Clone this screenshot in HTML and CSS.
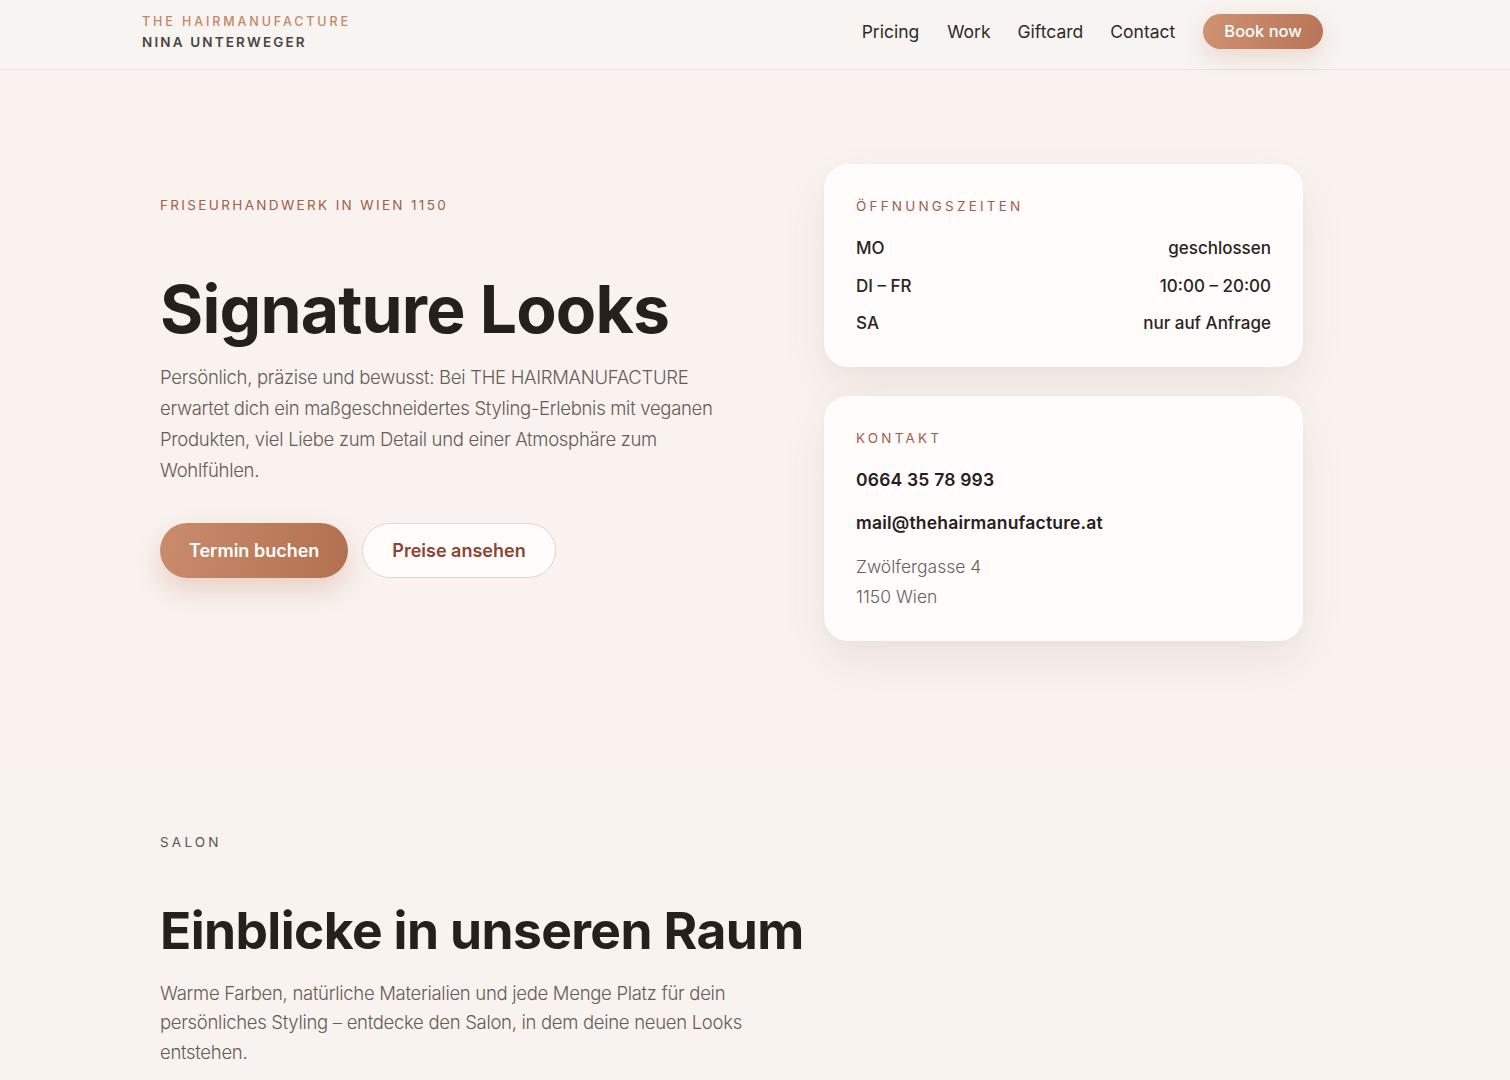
FILE: index.html
```html
<!DOCTYPE html>
<html lang="de">
<head>
  <meta charset="UTF-8" />
  <title>The Hairmanufacture – Nina Unterweger</title>
  <link rel="stylesheet" href="styles.css">
</head>
<body>

<header id="topbar">
  <div class="wrap topbar-inner">
    <a class="brand" href="#">
      <span class="brand-top">THE HAIRMANUFACTURE</span>
      <span class="brand-name">NINA UNTERWEGER</span>
    </a>
    <nav class="nav">
      <a href="#">Pricing</a>
      <a href="#">Work</a>
      <a href="#">Giftcard</a>
      <a href="#">Contact</a>
      <a href="#" class="btn-book">Book now</a>
    </nav>
  </div>
</header>

<main>
  <section class="hero">
    <div class="wrap hero-grid">
      <div class="hero-text">
        <p class="eyebrow">Friseurhandwerk in Wien 1150</p>
        <h1>Signature Looks</h1>
        <p class="lead">Persönlich, präzise und bewusst: Bei THE HAIRMANUFACTURE erwartet dich ein maßgeschneidertes Styling-Erlebnis mit veganen Produkten, viel Liebe zum Detail und einer Atmosphäre zum Wohlfühlen.</p>
        <div class="hero-actions">
          <a href="#" class="btn btn-primary">Termin buchen</a>
          <a href="#" class="btn btn-outline">Preise ansehen</a>
        </div>
      </div>

      <div class="hero-cards">
        <div class="card card-hours">
          <p class="eyebrow">Öffnungszeiten</p>
          <div class="hours-row"><span>MO</span><span>geschlossen</span></div>
          <div class="hours-row"><span>DI – FR</span><span>10:00 – 20:00</span></div>
          <div class="hours-row"><span>SA</span><span>nur auf Anfrage</span></div>
        </div>
        <div class="card card-contact">
          <p class="eyebrow">Kontakt</p>
          <a class="contact-line" href="#">0664 35 78 993</a>
          <a class="contact-line" href="#">mail@thehairmanufacture.at</a>
          <p class="address">Zwölfergasse 4<br>1150 Wien</p>
        </div>
      </div>
    </div>
  </section>

  <section class="salon">
    <div class="wrap salon-inner">
      <p class="eyebrow muted">Salon</p>
      <h2>Einblicke in unseren Raum</h2>
      <p class="lead">Warme Farben, natürliche Materialien und jede Menge Platz für dein persönliches Styling – entdecke den Salon, in dem deine neuen Looks entstehen.</p>
    </div>
  </section>
</main>

</body>
</html>
```

FILE: styles.css
```css
body {
  margin: 0;
  font-family: Inter, "Noto Sans", sans-serif;
  background-color: #f9f2ee;
  color: #2a2420;
  min-height: 100vh;
}

a {
  color: inherit;
  text-decoration: none;
}

p {
  margin: 0;
}

.wrap {
  width: 1181px;
  margin-left: 142px;
  box-sizing: border-box;
}

/* header */

#topbar {
  background-color: #f8f4f1;
  border-bottom: 1px solid #e8e1dd;
  height: 69px;
}

.topbar-inner {
  display: flex;
  justify-content: space-between;
  align-items: center;
  height: 100%;
}

.brand {
  display: flex;
  flex-direction: column;
  gap: 5px;
  margin-top: -6px;
}

.brand-top {
  font-size: 12.5px;
  letter-spacing: 2.9px;
  color: #c2866a;
  font-weight: 500;
}

.brand-name {
  font-size: 13.5px;
  letter-spacing: 2.15px;
  color: #4a4441;
  font-weight: 600;
}

.nav {
  display: flex;
  align-items: center;
  gap: 27px;
  font-size: 17.5px;
  color: #2f2a27;
  margin-top: -6px;
}

.nav a:first-child {
  margin-right: 1px;
}

.btn-book {
  margin-left: 1px;
  padding: 0 21px;
  height: 35px;
  line-height: 35px;
  border-radius: 18px;
  background: linear-gradient(100deg, #cf9273, #b87456);
  color: #fff;
  font-weight: 500;
  font-size: 16.5px;
  box-shadow: 0 8px 22px rgba(184, 116, 86, 0.22);
}

/* hero */

.hero {
  padding: 94px 0 0;
  height: 700px;
  box-sizing: border-box;
}

.hero-grid {
  display: grid;
  grid-template-columns: 1fr 479px;
  column-gap: 40px;
  padding: 0 20px 0 18px;
}

.hero-text {
  padding-top: 31px;
}

.eyebrow {
  font-size: 13.5px;
  letter-spacing: 3.2px;
  text-transform: uppercase;
  color: #a0604a;
  line-height: 20px;
}

.hero-text .eyebrow {
  letter-spacing: 2.35px;
}

.eyebrow.muted {
  color: #5c5451;
}

h1 {
  font-size: 66px;
  line-height: 1;
  font-weight: 700;
  letter-spacing: -0.8px;
  margin: 61px 0 0;
  color: #26201d;
}

.lead {
  font-size: 18.5px;
  line-height: 31px;
  font-weight: 300;
  color: #675b56;
  max-width: 580px;
  letter-spacing: -0.3px;
}

.hero-text .lead {
  margin-top: 20px;
}

.hero-actions {
  display: flex;
  gap: 14px;
  margin-top: 37px;
}

.btn {
  display: inline-block;
  height: 55px;
  line-height: 55px;
  padding: 0 29px;
  border-radius: 28px;
  font-size: 18px;
  font-weight: 600;
  box-sizing: border-box;
}

.btn-primary {
  background: linear-gradient(100deg, #c98c6d, #b37050);
  color: #fff;
  box-shadow: 0 12px 26px rgba(179, 112, 80, 0.25);
}

.btn-outline {
  background-color: #fffcfb;
  border: 1px solid #e6d4cc;
  line-height: 53px;
  padding: 0 29px;
  color: #8a4632;
}

.hero-cards {
  display: flex;
  flex-direction: column;
  gap: 29px;
}

.card {
  background-color: #fffcfb;
  border-radius: 24px;
  padding: 32px 32px 29px;
  box-shadow: 0 20px 45px rgba(120, 90, 75, 0.09), 0 2px 6px rgba(120, 90, 75, 0.04);
}

.card-hours {
  padding-bottom: 25px;
}

.card .eyebrow {
  margin-bottom: 13px;
}

.hours-row {
  display: flex;
  justify-content: space-between;
  font-size: 17px;
  font-weight: 500;
  line-height: 26px;
  padding: 6px 0 5.5px;
  color: #2a2420;
}

.contact-line {
  display: block;
  font-size: 17.5px;
  font-weight: 600;
  line-height: 26px;
  letter-spacing: 0.2px;
  margin-top: 19px;
  margin-bottom: 17px;
  color: #26201d;
}

.contact-line + .contact-line {
  margin-top: 0;
}

.address {
  font-size: 17.5px;
  font-weight: 300;
  line-height: 30px;
  color: #6a605c;
  margin-top: -1px;
}

/* salon */

.salon {
  background-color: #f8f3ef;
  padding: 62px 0 40px;
}

.salon-inner {
  padding: 0 18px;
}

h2 {
  font-size: 51.5px;
  line-height: 1;
  font-weight: 700;
  letter-spacing: -0.6px;
  margin: 53px 0 0;
  color: #26201d;
}

.salon .lead {
  max-width: 600px;
  margin-top: 22px;
  line-height: 29.5px;
}
```
